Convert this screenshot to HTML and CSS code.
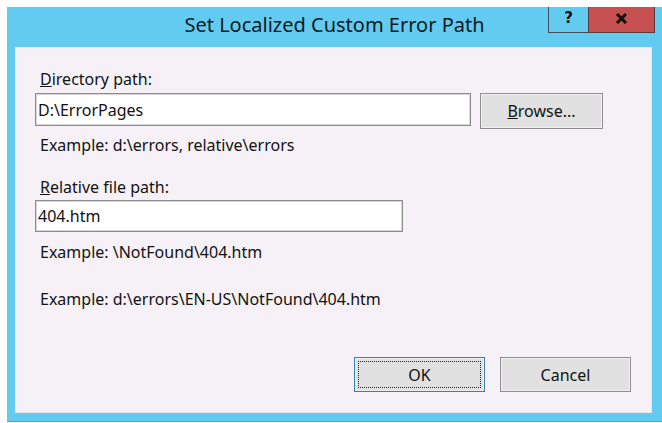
FILE: index.html
```html
<!DOCTYPE html>
<html>
<head>
<meta charset="utf-8">
<link rel="stylesheet" href="styles.css">
</head>
<body>
<div class="window">
  <div class="titlebar">
    <div class="title">Set Localized Custom Error Path</div>
    <div class="caption-buttons">
      <div class="cap-btn help">?</div>
      <div class="cap-btn close">
        <svg width="13" height="11" viewBox="0 0 13 11"><path d="M2 1 L11 10 M11 1 L2 10" stroke="#111" stroke-width="3" stroke-linecap="butt"/></svg>
      </div>
    </div>
  </div>
  <div class="client">
    <div class="label label-first"><u>D</u>irectory path:</div>
    <div class="row">
      <div class="input input-dir">D:\ErrorPages</div>
      <div class="btn btn-browse"><span><u>B</u>rowse...</span></div>
    </div>
    <div class="hint hint-first">Example: d:\errors, relative\errors</div>
    <div class="label label-second"><u>R</u>elative file path:</div>
    <div class="input input-file">404.htm</div>
    <div class="hint hint-second">Example: \NotFound\404.htm</div>
    <div class="hint hint-third">Example: d:\errors\EN-US\NotFound\404.htm</div>
    <div class="actions">
      <div class="btn btn-ok"><span class="focus">OK</span></div>
      <div class="btn btn-cancel"><span>Cancel</span></div>
    </div>
  </div>
</div>
</body>
</html>
```
FILE: styles.css
```css
html, body {
  margin: 0;
  padding: 0;
  background: #ffffff;
}
body {
  font-family: "Noto Sans", "Open Sans", sans-serif;
  color: #121212;
  overflow: hidden;
  width: 662px;
  height: 423px;
}
.window {
  margin: 7px 0 0 7px;
  width: 655px;
  height: 415px;
  background: #62cbef;
  display: flex;
  flex-direction: column;
  box-sizing: border-box;
  border-bottom: 1px solid #4fa9cc;
}
.titlebar {
  position: relative;
  height: 40px;
  flex: none;
}
.title {
  text-align: center;
  font-size: 20px;
  line-height: 22px;
  padding-top: 7px;
  color: #10191f;
}
.caption-buttons {
  position: absolute;
  top: 0;
  right: 7px;
  display: flex;
}
.cap-btn {
  height: 26px;
  box-sizing: border-box;
  display: flex;
  align-items: center;
  justify-content: center;
}
.help {
  width: 40px;
  border-left: 1px solid #3d4f5c;
  border-bottom: 1px solid #3d4f5c;
  font-family: "DejaVu Sans", sans-serif;
  font-weight: bold;
  font-size: 15px;
  color: #111;
  padding-bottom: 4px;
}
.close {
  width: 67px;
  background: #c75050;
  border-left: 1px solid #5b3a3a;
  border-bottom: 1px solid #5b3a3a;
  border-right: 1px solid #5b3a3a;
  padding-bottom: 2px;
}
.client {
  flex: 1;
  margin: 0 10px 8px 8px;
  background: #f6f1f6;
  border: 1px solid #e3e7f0;
  padding: 0 20px 0 19px;
  display: flex;
  flex-direction: column;
  font-size: 16px;
}
.label, .hint {
  line-height: 22px;
  padding-left: 5px;
}
.label-first { margin-top: 20px; }
.row {
  display: flex;
  align-items: flex-start;
  margin-top: 3px;
}
.input {
  background: #ffffff;
  border: 1px solid #8c8c8c;
  box-shadow: inset 0 0 0 1px #d8d8d8;
  box-sizing: border-box;
  padding-left: 2px;
  display: flex;
  align-items: center;
}
.input-dir {
  width: 436px;
  height: 33px;
}
.btn {
  background: #e1e1e1;
  border: 1px solid #8f8f8f;
  box-shadow: inset 0 0 0 1px #f0f0f0;
  box-sizing: border-box;
  display: flex;
  align-items: center;
  justify-content: center;
}
.btn-browse {
  width: 123px;
  height: 36px;
  margin-left: 9px;
}
.hint-first { margin-top: 5px; }
.label-second { margin-top: 20px; }
.input-file {
  width: 368px;
  height: 32px;
  margin-top: 2px;
}
.hint-second { margin-top: 9px; }
.hint-third { margin-top: 25px; }
.actions {
  display: flex;
  justify-content: flex-end;
  gap: 15px;
  margin-top: 47px;
}
.btn-ok, .btn-cancel {
  width: 131px;
  height: 35px;
}
.btn-ok {
  border-color: #3c7fb1;
  padding: 3px;
}
.btn-ok .focus {
  flex: 1;
  align-self: stretch;
  border: 1px dotted #222;
  display: flex;
  align-items: center;
  justify-content: center;
}
```
